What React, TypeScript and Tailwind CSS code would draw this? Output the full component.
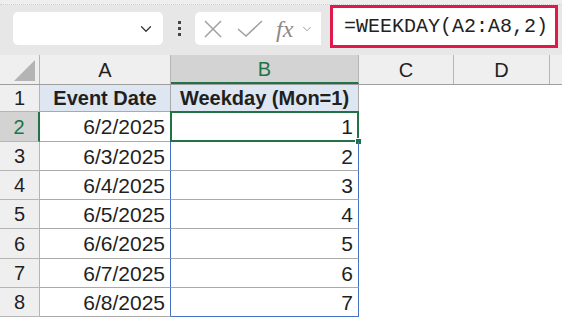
import { ChevronDown } from 'lucide-react';

const dates = ['6/2/2025', '6/3/2025', '6/4/2025', '6/5/2025', '6/6/2025', '6/7/2025', '6/8/2025'];
const rowHeights = ['h-[30px]', 'h-[29px]', 'h-[29px]', 'h-[29px]', 'h-[30px]', 'h-[29px]', 'h-[29px]'];

const App = () => {
  return (
    <div className="w-[562px] h-[318px] overflow-hidden bg-white font-['Liberation_Sans',Arial,sans-serif] text-[#1f1f1f]">
      {/* toolbar */}
      <div className="h-[55px] bg-[#e7e7e7] flex flex-col">
        <div className="h-[5px] bg-[#eeeeee] border-b border-dotted border-[#cfcfcf]" />
        <div className="flex items-start pt-[7px] pl-[13px]">
          <div className="w-[150px] h-[33px] bg-white rounded-[5px] flex items-center justify-end pr-[8px]">
            <ChevronDown className="w-[18px] h-[18px] text-[#333]" strokeWidth={1.6} />
          </div>
          <div className="w-[32px] h-[33px] flex flex-col items-center justify-center gap-[3px]">
            <span className="w-[3px] h-[3px] bg-[#444]" />
            <span className="w-[3px] h-[3px] bg-[#444]" />
            <span className="w-[3px] h-[3px] bg-[#444]" />
          </div>
          <div className="w-[126px] h-[33px] bg-white rounded-l-[5px] flex items-center pl-[8px]">
            <svg width="20" height="20" viewBox="0 0 20 20" className="mr-[14px]">
              <path d="M2 2 L18 18 M18 2 L2 18" stroke="#a0a0a0" strokeWidth="1.5" fill="none" />
            </svg>
            <svg width="26" height="18" viewBox="0 0 26 18" className="mr-[13px]">
              <path d="M1 9 L9 16 L25 1" stroke="#a0a0a0" strokeWidth="1.5" fill="none" />
            </svg>
            <span className="font-['Liberation_Serif',serif] italic text-[24px] leading-none text-[#8a8a8a] mr-[7px]">fx</span>
            <ChevronDown className="w-[14px] h-[14px] text-[#9a9a9a]" strokeWidth={1.6} />
          </div>
          <div className="ml-[9px] -mt-[7px] w-[228px] h-[43px] bg-white border-[3px] border-[#e0194a] flex items-center pl-[11px] font-['Liberation_Mono',monospace] text-[20px] text-[#222]">
            =WEEKDAY(A2:A8,2)
          </div>
        </div>
      </div>

      {/* column headers */}
      <div className="flex h-[30px] bg-[#efefef] border-b border-[#9e9e9e] text-[20px] leading-none">
        <div className="w-[40px] border-r border-[#b5b5b5] flex items-end justify-end pr-[4px] pb-[3px]">
          <svg width="21" height="21" viewBox="0 0 21 21">
            <path d="M21 0 L21 21 L0 21 Z" fill="#b4b4b4" />
          </svg>
        </div>
        <div className="w-[131px] border-r border-[#b5b5b5] flex items-center justify-center">A</div>
        <div className="w-[188px] bg-[#d3d3d3] border-r border-[#b5b5b5] border-b-2 border-b-[#217346] flex items-center justify-center text-[#217346]">B</div>
        <div className="w-[95px] border-r border-[#b5b5b5] flex items-center justify-center">C</div>
        <div className="w-[96px] border-r border-[#b5b5b5] flex items-center justify-center">D</div>
        <div className="flex-1" />
      </div>

      {/* row 1 */}
      <div className="flex h-[27px] text-[20px] leading-none">
        <div className="w-[40px] bg-[#efefef] border-r border-b border-[#b5b5b5] flex items-center justify-center">1</div>
        <div className="w-[131px] bg-[#dde6f1] border-r border-b border-[#a9a9a9] flex items-center justify-center font-bold">Event Date</div>
        <div className="w-[188px] bg-[#dde6f1] border-r border-b border-[#a9a9a9] flex items-center justify-center font-bold">Weekday (Mon=1)</div>
        <div className="flex-1" />
      </div>

      {dates.map((d, i) => {
        const selected = i === 0;
        const last = i === dates.length - 1;
        return (
          <div key={d} className={`flex ${rowHeights[i]} text-[21px] leading-none`}>
            <div
              className={
                selected
                  ? 'w-[40px] bg-[#d3d3d3] text-[#217346] text-[20px] border-r-2 border-r-[#217346] border-b border-b-[#b5b5b5] flex items-center justify-center'
                  : 'w-[40px] bg-[#efefef] text-[20px] border-r border-b border-[#b5b5b5] flex items-center justify-center'
              }
            >
              {i + 2}
            </div>
            <div className="w-[131px] border-b border-b-[#a9a9a9] border-r border-r-[#4472c4] flex items-center justify-end pr-[5px]">{d}</div>
            <div
              className={`relative w-[188px] border-r border-r-[#4472c4] flex items-center justify-end pr-[5px] ${
                last ? 'border-b border-b-[#4472c4]' : 'border-b border-b-[#a9a9a9]'
              }`}
            >
              {i + 1}
              {selected && (
                <>
                  <div className="absolute -left-[1px] -top-[1px] -right-[1px] -bottom-[1px] border-2 border-[#217346]" />
                  <div className="absolute -right-[4px] -bottom-[4px] w-[7px] h-[7px] bg-[#217346] border border-white" />
                </>
              )}
            </div>
            <div className="flex-1" />
          </div>
        );
      })}
    </div>
  );
};

export default App;
